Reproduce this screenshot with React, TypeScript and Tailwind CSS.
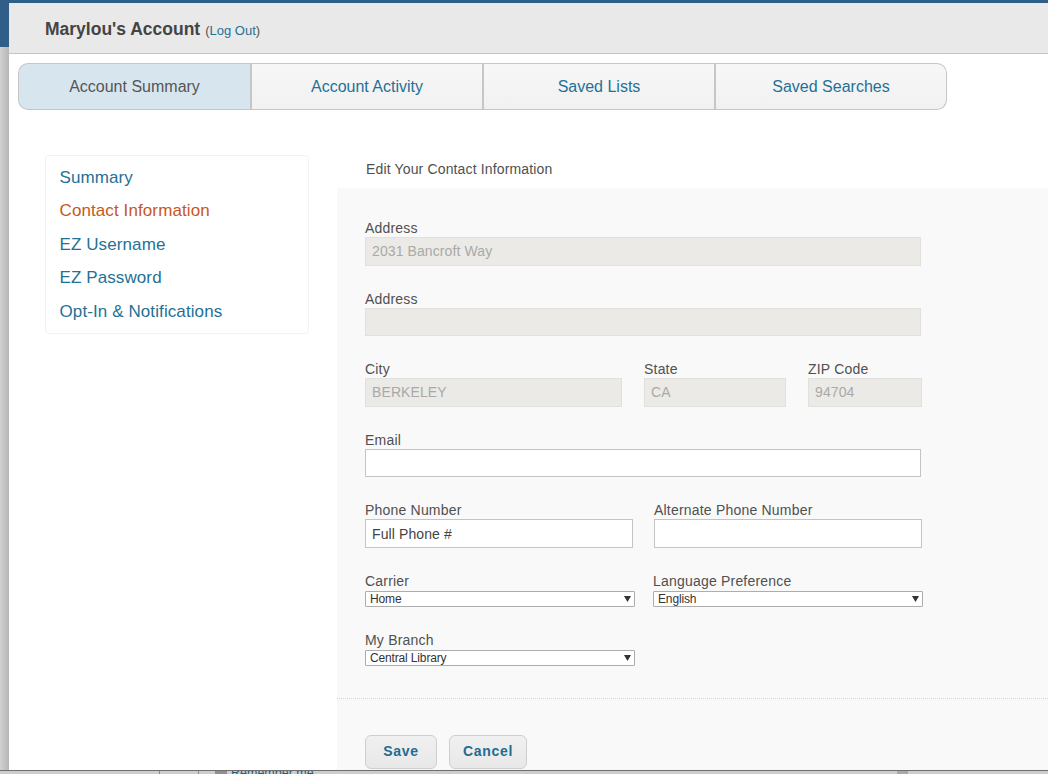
import React from 'react';

const labelCls = "block h-[18px] text-[14px] leading-[18px] tracking-[0.2px] text-[#505050]";
const lockedCls = "block w-full px-[6px] pb-[2px] bg-[#ebeae6] border border-[#e0e0dc] text-[14px] tracking-[0.1px] text-[#a9a9a9] outline-none";
const openCls = "block w-full px-[6px] bg-white border border-[#c4c4c4] text-[14px] tracking-[0.1px] text-[#444] outline-none";

type FieldProps = { label: string; value: string; className: string; inputHeight?: string };

const Locked = ({ label, value, className, inputHeight = "h-[29px]" }: FieldProps) => (
  <div className={className}>
    <label className={labelCls}>{label}</label>
    <input className={lockedCls + " " + inputHeight} value={value} readOnly />
  </div>
);

const Open = ({ label, value, className, inputHeight = "h-[29px]" }: FieldProps) => (
  <div className={className}>
    <label className={labelCls}>{label}</label>
    <input className={openCls + " " + inputHeight} value={value} readOnly />
  </div>
);

const Pick = ({ label, value, className }: FieldProps) => (
  <div className={className}>
    <label className="block h-[19px] text-[14px] leading-[18px] tracking-[0.2px] text-[#505050]">{label}</label>
    <div className="relative h-[16px]">
      <select className="block w-full h-[16px] appearance-none bg-white border border-[#adadad] rounded-[1px] pl-[4px] text-[12px] leading-[14px] tracking-[-0.15px] text-[#333] outline-none">
        <option>{value}</option>
      </select>
      <svg className="absolute right-[4px] top-[5px]" width="7" height="6" viewBox="0 0 7 6">
        <path d="M0 0h7L3.5 6z" fill="#333" />
      </svg>
    </div>
  </div>
);

const Tab = ({ label, className }: { label: string; className: string }) => (
  <div className={"h-[47px] flex items-center justify-center border-y border-[#c6c6c6] text-[16px] " + className}>
    {label}
  </div>
);

const navItems = ["Summary", "Contact Information", "EZ Username", "EZ Password", "Opt-In & Notifications"];

const tabIdle = "w-[232px] bg-gradient-to-b from-[#f7f7f7] to-[#f1f1f1] text-[#1f7196]";
const buttonCls = "h-[34px] pb-[2px] rounded-[6px] border border-[#cfcfcf] bg-gradient-to-b from-[#f0f0f0] to-[#e8e8e8] text-[14px] font-bold tracking-[0.7px] text-[#1f6c92]";

export default function App() {
  return (
    <div className="relative h-[774px] w-[1048px] overflow-hidden bg-gradient-to-r from-[#d2d2d2] to-[#b6b6b6] bg-[length:9px_100%] bg-no-repeat font-['Liberation_Sans',Arial,sans-serif]">
      {/* page behind the dialog */}
      <div className="h-[3px] bg-[#2f5f88]" />
      <div className="absolute left-0 top-0 h-[47px] w-[9px] bg-[#2f5f88]" />

      <div className="ml-[9px] h-[767px] w-[1039px] overflow-hidden bg-white">
        <div className="h-[51px] flex items-center pl-[36px] pt-[3px] bg-[#e9e9e9] border-b border-[#c4c4c4]">
          <span className="text-[17.5px] font-bold text-[#444]">Marylou's Account</span>
          <span className="ml-[5px] mt-[2px] text-[13px] text-[#555]">
            (<a className="text-[#1f7196]">Log Out</a>)
          </span>
        </div>

        <div className="flex mt-[9px] ml-[9px]">
          <Tab label="Account Summary" className="w-[232px] bg-[#d7e6ee] text-[#555] rounded-l-[10px] border-l" />
          <Tab label="Account Activity" className={tabIdle + " border-l-2"} />
          <Tab label="Saved Lists" className={tabIdle + " border-l-2"} />
          <Tab label="Saved Searches" className={tabIdle + " w-[233px] border-l-2 border-r rounded-r-[10px]"} />
        </div>

        <div className="flex mt-[45px]">
          <aside className="ml-[36px] w-[264px] h-[179px] shrink-0 border border-[#f2f2f2] rounded-[4px] pl-[13.5px] pt-[4.8px] text-[17px] tracking-[0.1px]">
            {navItems.map((item) => (
              <div key={item} className={"h-[33.5px] leading-[33px] " + (item === "Contact Information" ? "text-[#c8581a]" : "text-[#1f7196]")}>
                {item}
              </div>
            ))}
          </aside>

          <main className="ml-[28px] flex-1 min-w-0">
            <div className="h-[33px] pl-[29px] pt-[5px] text-[14px] leading-[18px] tracking-[0.15px] text-[#505050]">Edit Your Contact Information</div>
            <div className="bg-[#f9f9f9] h-[600px]">
              <div className="h-[511px] pl-[28px] pt-[31px] border-b border-dotted border-[#d4d4d4]">
                <div className="w-[560px]">
                  <Locked label="Address" value="2031 Bancroft Way" className="w-[556px]" />
                  <Locked label="Address" value="" className="w-[556px] mt-[24px]" inputHeight="h-[28px]" />
                  <div className="flex mt-[24px]">
                    <Locked label="City" value="BERKELEY" className="w-[257px]" />
                    <Locked label="State" value="CA" className="w-[142px] ml-[22px]" />
                    <Locked label="ZIP Code" value="94704" className="w-[114px] ml-[22px]" />
                  </div>
                  <Open label="Email" value="" className="w-[556px] mt-[24px]" inputHeight="h-[28px]" />
                  <div className="flex mt-[24px]">
                    <Open label="Phone Number" value="Full Phone #" className="w-[268px]" />
                    <Open label="Alternate Phone Number" value="" className="w-[268px] ml-[21px]" />
                  </div>
                  <div className="flex mt-[24px]">
                    <Pick label="Carrier" value="Home" className="w-[270px]" />
                    <Pick label="Language Preference" value="English" className="w-[270px] ml-[18px]" />
                  </div>
                  <Pick label="My Branch" value="Central Library" className="w-[270px] mt-[24px]" />
                </div>
              </div>
              <div className="flex gap-[12px] pl-[28px] pt-[36px]">
                <button className={buttonCls + " w-[72px]"}>Save</button>
                <button className={buttonCls + " w-[78px]"}>Cancel</button>
              </div>
            </div>
          </main>
        </div>
      </div>

      {/* what shows of the page under the dialog */}
      <div className="relative h-[4px] overflow-hidden border-t border-[#6f6f6f] bg-[#cdcdcd]">
        <div className="absolute left-[159px] top-0 h-[3px] w-px bg-[#8a8a8a]" />
        <div className="absolute left-[198px] top-0 h-[3px] w-px bg-[#8a8a8a]" />
        <div className="absolute left-[215px] top-0 h-[3px] w-[12px] bg-[#8f8f8f]" />
        <div className="absolute left-[231px] top-[-5px] whitespace-nowrap text-[12.5px] leading-[15px] text-[#1f5f80]">Remember me</div>
        <div className="absolute left-[897px] top-0 h-[3px] w-[11px] bg-[#a8a8a8]" />
      </div>
    </div>
  );
}
